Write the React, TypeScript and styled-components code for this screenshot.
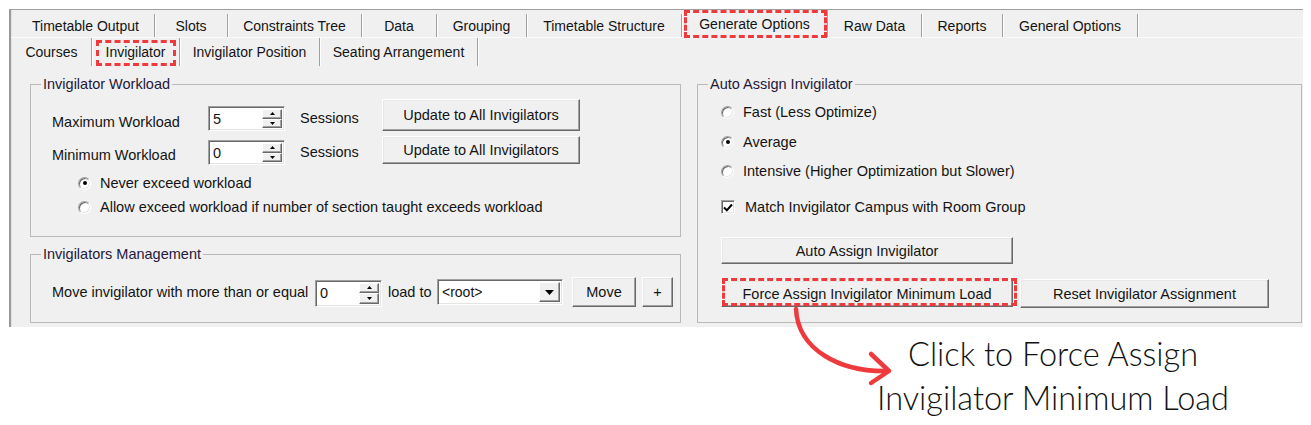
import styled, { createGlobalStyle } from 'styled-components';

const RED = '#ef3a3d';

const GlobalStyle = createGlobalStyle`
  html, body { margin: 0; padding: 0; background: #ffffff; }
  body { font-family: 'Liberation Sans', Arial, sans-serif; }
  * { box-sizing: border-box; }
`;

const Page = styled.div`
  position: relative;
  width: 1311px;
  height: 425px;
  padding: 9px 0 0 9px;
  overflow: hidden;
`;

const Window = styled.div`
  width: 1294px;
  height: 318px;
  display: flex;
  flex-direction: column;
  background: #f0f0f0;
  border-top: 1px solid #a0a0a0;
  border-left: 2px solid #9b9b9b;
  box-shadow: inset 1px 0 0 #e3e3e3;
  color: #141414;
  font-family: 'Liberation Sans', Arial, sans-serif;
  font-size: 14.5px;
`;

const TabRow = styled.div<{ $indent: number; $rule?: boolean }>`
  display: flex;
  align-items: flex-end;
  height: 28px;
  padding-left: ${p => p.$indent}px;
  border-bottom: ${p => (p.$rule ? '1px solid #fbfbfb' : 'none')};
  font-size: 14px;
`;

const Tab = styled.div<{ $w: number; $h: number }>`
  position: relative;
  flex: none;
  width: ${p => p.$w}px;
  height: ${p => p.$h}px;
  display: flex;
  align-items: center;
  justify-content: center;
  border-right: 1px solid #a0a0a0;
  box-shadow: 1px 0 0 #ffffff;
  white-space: nowrap;
`;

const Mark = styled.span<{ $inset: string }>`
  position: absolute;
  inset: ${p => p.$inset};
  border: 3px dashed ${RED};
  pointer-events: none;
`;

const Panels = styled.div`
  flex: 1;
  display: flex;
  gap: 16px;
  padding: 10px 0 0 19px;
`;

const Column = styled.div`
  display: flex;
  flex-direction: column;
  gap: 9px;
  width: 651px;
`;

const Group = styled.fieldset<{ $w?: number; $h: number }>`
  margin: 0;
  padding: 0;
  min-width: 0;
  width: ${p => (p.$w ? `${p.$w}px` : '100%')};
  height: ${p => p.$h}px;
  border: 1px solid #b9b9b9;
`;

const Legend = styled.legend`
  margin-left: 10px;
  padding: 0 2px;
  line-height: 16px;
  color: #25183a;
`;

const Inner = styled.div<{ $pt: number; $pl: number }>`
  display: flex;
  flex-direction: column;
  align-items: flex-start;
  padding: ${p => p.$pt}px 0 0 ${p => p.$pl}px;
`;

const FieldRow = styled.div<{ $h: number; $top?: number; $center?: boolean }>`
  display: flex;
  align-items: ${p => (p.$center ? 'center' : 'flex-start')};
  height: ${p => p.$h}px;
  margin-top: ${p => p.$top ?? 0}px;
`;

const Caption = styled.span<{ $w?: number; $top?: number; $left?: number }>`
  flex: none;
  width: ${p => (p.$w ? `${p.$w}px` : 'auto')};
  margin-top: ${p => p.$top ?? 0}px;
  margin-left: ${p => p.$left ?? 0}px;
  line-height: 16px;
  white-space: nowrap;
`;

const Sunken = styled.div<{ $w: number; $h: number; $top?: number; $left?: number }>`
  flex: none;
  display: flex;
  width: ${p => p.$w}px;
  height: ${p => p.$h}px;
  margin-top: ${p => p.$top ?? 0}px;
  margin-left: ${p => p.$left ?? 0}px;
  padding: 1px;
  background: #ffffff;
  border: 1px solid;
  border-color: #a0a0a0 #ffffff #ffffff #a0a0a0;
  box-shadow: inset 1px 1px 0 #696969, inset -1px -1px 0 #e3e3e3;
`;

const FieldText = styled.span<{ $size?: number }>`
  flex: 1;
  display: flex;
  align-items: center;
  padding-left: 3px;
  font-size: ${p => p.$size ?? 14.5}px;
  line-height: 16px;
`;

const Steps = styled.div`
  flex: none;
  display: flex;
  flex-direction: column;
  width: 20px;
  margin: 1px 1px 1px 0;
`;

const Step = styled.span`
  flex: 1;
  display: flex;
  align-items: center;
  justify-content: center;
  background: #f0f0f0;
  border: 1px solid;
  border-color: #ffffff #696969 #696969 #ffffff;
  box-shadow: inset -1px -1px 0 #a0a0a0;
`;

const DropButton = styled(Step)`
  flex: none;
  width: 21px;
  margin: 1px 1px 1px 0;
`;

const Button = styled.button<{ $w: number; $h: number; $top?: number; $left?: number }>`
  position: relative;
  flex: none;
  width: ${p => p.$w}px;
  height: ${p => p.$h}px;
  margin: ${p => p.$top ?? 0}px 0 0 ${p => p.$left ?? 0}px;
  padding: 0;
  font: inherit;
  color: #141414;
  background: #f0f0f0;
  border: 1px solid;
  border-color: #ffffff #696969 #696969 #ffffff;
  box-shadow: inset -1px -1px 0 #a0a0a0, inset 1px 1px 0 #e8e8e8;
  white-space: nowrap;
`;

const Option = styled.label<{ $top?: number; $left?: number; $gap?: number }>`
  display: flex;
  align-items: center;
  gap: ${p => p.$gap ?? 9}px;
  height: 18px;
  margin: ${p => p.$top ?? 0}px 0 0 ${p => p.$left ?? 0}px;
  line-height: 16px;
  white-space: nowrap;
`;

const Radio = styled.span<{ $on?: boolean }>`
  position: relative;
  flex: none;
  width: 13px;
  height: 13px;
  border-radius: 50%;
  background: #ffffff;
  border: 1px solid;
  border-color: #a0a0a0 #ffffff #ffffff #a0a0a0;
  box-shadow: inset 1px 1px 0 #696969, inset -1px -1px 0 #e3e3e3;

  &::after {
    content: '';
    display: ${p => (p.$on ? 'block' : 'none')};
    position: absolute;
    left: 50%;
    top: 50%;
    width: 4px;
    height: 4px;
    margin: -2px 0 0 -2px;
    border-radius: 50%;
    background: #000000;
  }
`;

const Check = styled.span`
  flex: none;
  display: flex;
  align-items: center;
  justify-content: center;
  width: 14px;
  height: 14px;
  background: #ffffff;
  border: 1px solid;
  border-color: #a0a0a0 #ffffff #ffffff #a0a0a0;
  box-shadow: inset 1px 1px 0 #696969, inset -1px -1px 0 #e3e3e3;
`;

const Pointer = styled.svg`
  position: absolute;
  left: 780px;
  top: 298px;
  width: 120px;
  height: 95px;
  overflow: visible;
`;

const Note = styled.div`
  width: 440px;
  margin: 5px 0 0 824px;
  text-align: center;
  font-family: Lato, 'Open Sans', sans-serif;
  font-weight: 300;
  font-size: 32.5px;
  line-height: 44px;
  color: #111111;
`;

const mainTabs = [
  { label: 'Timetable Output', w: 138 },
  { label: 'Slots', w: 73 },
  { label: 'Constraints Tree', w: 134 },
  { label: 'Data', w: 75 },
  { label: 'Grouping', w: 90 },
  { label: 'Timetable Structure', w: 155 },
  { label: 'Generate Options', w: 146, active: true },
  { label: 'Raw Data', w: 94 },
  { label: 'Reports', w: 81 },
  { label: 'General Options', w: 135 },
];

const subTabs = [
  { label: 'Courses', w: 80 },
  { label: 'Invigilator', w: 88, active: true },
  { label: 'Invigilator Position', w: 140 },
  { label: 'Seating Arrangement', w: 158 },
];

const Arrow = ({ up }: { up?: boolean }) => (
  <svg width="5" height="3" viewBox="0 0 5 3">
    <path d={up ? 'M0 3 L2.5 0 L5 3Z' : 'M0 0 L2.5 3 L5 0Z'} fill="#000" />
  </svg>
);

const Spin = ({ value, w, h, top, left }: { value: string; w: number; h: number; top?: number; left?: number }) => (
  <Sunken $w={w} $h={h} $top={top} $left={left}>
    <FieldText>{value}</FieldText>
    <Steps>
      <Step><Arrow up /></Step>
      <Step><Arrow /></Step>
    </Steps>
  </Sunken>
);

export default function App() {
  return (
    <Page>
      <GlobalStyle />
      <Window>
        <TabRow $indent={6} $rule>
          {mainTabs.map(t => (
            <Tab key={t.label} $w={t.w} $h={t.active ? 27 : 23}>
              {t.label}
              {t.active && <Mark $inset="0 0 -1px 2px" />}
            </Tab>
          ))}
        </TabRow>
        <TabRow $indent={1}>
          {subTabs.map(t => (
            <Tab key={t.label} $w={t.w} $h={28}>
              {t.label}
              {t.active && <Mark $inset="2px 3px 0 4px" />}
            </Tab>
          ))}
        </TabRow>

        <Panels>
          <Column>
            <Group $h={161}>
              <Legend>Invigilator Workload</Legend>
              <Inner $pt={7} $pl={21}>
                <FieldRow $h={32}>
                  <Caption $w={156} $top={15}>Maximum Workload</Caption>
                  <Spin value="5" w={77} h={25} top={7} />
                  <Caption $w={82} $top={11} $left={15}>Sessions</Caption>
                  <Button $w={198} $h={32}>Update to All Invigilators</Button>
                </FieldRow>
                <FieldRow $h={29} $top={5}>
                  <Caption $w={156} $top={11}>Minimum Workload</Caption>
                  <Spin value="0" w={77} h={25} top={4} />
                  <Caption $w={82} $top={8} $left={15}>Sessions</Caption>
                  <Button $w={198} $h={28}>Update to All Invigilators</Button>
                </FieldRow>
                <Option $top={9} $left={26}>
                  <Radio $on />
                  Never exceed workload
                </Option>
                <Option $top={6} $left={26}>
                  <Radio />
                  Allow exceed workload if number of section taught exceeds workload
                </Option>
              </Inner>
            </Group>

            <Group $h={77}>
              <Legend>Invigilators Management</Legend>
              <Inner $pt={15} $pl={21}>
                <FieldRow $h={30} $center>
                  <Caption $w={263}>Move invigilator with more than or equal</Caption>
                  <Spin value="0" w={67} h={27} top={2} />
                  <Caption $w={49} $left={6}>load to</Caption>
                  <Sunken $w={126} $h={26}>
                    <FieldText $size={14}>&lt;root&gt;</FieldText>
                    <DropButton>
                      <svg width="9" height="5" viewBox="0 0 9 5">
                        <path d="M0 0 L4.5 5 L9 0Z" fill="#000" />
                      </svg>
                    </DropButton>
                  </Sunken>
                  <Button $w={64} $h={30} $left={9}>Move</Button>
                  <Button $w={31} $h={30} $left={6}>+</Button>
                </FieldRow>
              </Inner>
            </Group>
          </Column>

          <Group $w={605} $h={247}>
            <Legend>Auto Assign Invigilator</Legend>
            <Inner $pt={11} $pl={23}>
              <Option>
                <Radio />
                Fast (Less Optimize)
              </Option>
              <Option $top={12}>
                <Radio $on />
                Average
              </Option>
              <Option $top={11}>
                <Radio />
                Intensive (Higher Optimization but Slower)
              </Option>
              <Option $top={18} $gap={10}>
                <Check>
                  <svg width="10" height="9" viewBox="0 0 10 9">
                    <path d="M1 4.5 L3.8 7.3 L9 1.5" fill="none" stroke="#000" strokeWidth="2" />
                  </svg>
                </Check>
                Match Invigilator Campus with Room Group
              </Option>
              <Button $w={292} $h={27} $top={21}>Auto Assign Invigilator</Button>
              <FieldRow $h={29} $top={15}>
                <Button $w={292} $h={27} $top={1}>
                  Force Assign Invigilator Minimum Load
                  <Mark $inset="-3px -5px 0 0" />
                </Button>
                <Button $w={249} $h={29} $left={7}>Reset Invigilator Assignment</Button>
              </FieldRow>
            </Inner>
          </Group>
        </Panels>
      </Window>

      <Note>
        Click to Force Assign
        <br />
        Invigilator Minimum Load
      </Note>

      <Pointer viewBox="780 298 120 95">
        <path d="M796 309 C798 350 840 372 887 371" fill="none" stroke={RED} strokeWidth="4.5" strokeLinecap="round" />
        <path d="M871 354 L889 371 L871 383" fill="none" stroke={RED} strokeWidth="4.5" strokeLinecap="round" strokeLinejoin="round" />
      </Pointer>
    </Page>
  );
}
